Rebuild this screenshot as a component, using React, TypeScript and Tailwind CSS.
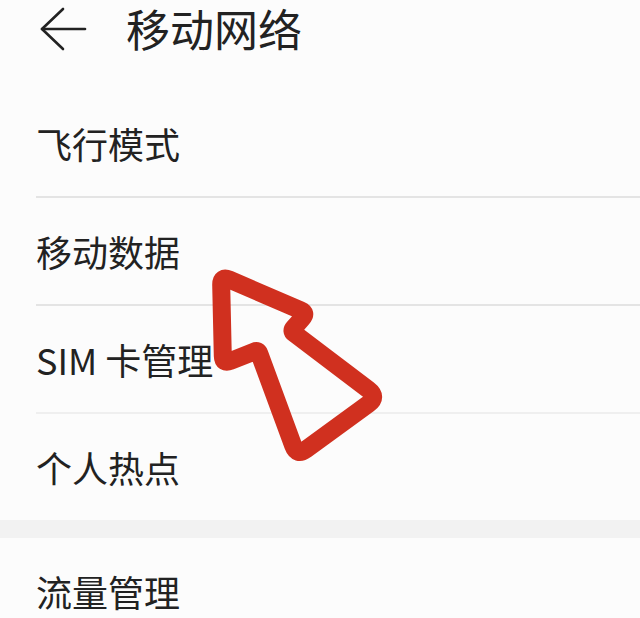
import { useMemo } from 'react'

const items = [
  { label: '飞行模式', divider: 'bg-[#e4e4e4]' },
  { label: '移动数据', divider: 'bg-[#e4e4e4]' },
  { label: 'SIM 卡管理', divider: 'bg-[#efefef]' },
  { label: '个人热点', divider: '' },
]

const cjk = { fontFamily: '"Noto Sans CJK SC", sans-serif' }

// corners of the hand-drawn pointer: x, y, rounding
const pts: [number, number, number][] = [
  [221, 276, 9],
  [307, 313, 7],
  [291, 331, 4],
  [378, 397, 12],
  [297, 456, 11],
  [258, 350, 4],
  [223, 364, 8],
]

function roundedPath(p: [number, number, number][]) {
  const n = p.length
  let d = ''
  for (let i = 0; i < n; i++) {
    const [x, y, r] = p[i]
    const [ax, ay] = p[(i - 1 + n) % n]
    const [bx, by] = p[(i + 1) % n]
    const la = Math.hypot(ax - x, ay - y)
    const lb = Math.hypot(bx - x, by - y)
    const p1 = [x + ((ax - x) * r) / la, y + ((ay - y) * r) / la]
    const p2 = [x + ((bx - x) * r) / lb, y + ((by - y) * r) / lb]
    d += `${i === 0 ? 'M' : 'L'}${p1[0].toFixed(1)} ${p1[1].toFixed(1)} Q${x} ${y} ${p2[0].toFixed(1)} ${p2[1].toFixed(1)} `
  }
  return d + 'Z'
}

function RedArrow() {
  const d = useMemo(() => roundedPath(pts), [])
  return (
    <svg className="pointer-events-none absolute inset-0" width="640" height="618" viewBox="0 0 640 618">
      <path d={d} fill="none" stroke="#d0301f" strokeWidth="18" strokeLinejoin="round" />
    </svg>
  )
}

export default function App() {
  return (
    <div
      className="relative h-[618px] w-[640px] overflow-hidden bg-[#fcfcfc] text-[#222]"
      style={{ fontFamily: '"Noto Sans", "Noto Sans CJK SC", sans-serif' }}
    >
      <header className="h-[90px]">
        <div className="flex h-[58px] items-center">
          <div className="ml-[38px] flex h-[46px] w-[50px] items-center">
            <svg width="50" height="46" viewBox="0 0 50 46" fill="none" stroke="#222" strokeWidth="2.6" strokeLinecap="round" strokeLinejoin="round">
              <path d="M25 3 L4 23 L25 43" />
              <path d="M4 23 H47" />
            </svg>
          </div>
          <h1 className="ml-[38px] text-[44px] leading-[1.3] font-normal" style={cjk}>
            移动网络
          </h1>
        </div>
      </header>

      <div>
        {items.map(item => (
          <div key={item.label}>
            <div className="flex h-[106px] items-center pl-[36px] text-[36px] leading-none" style={cjk}>
              {item.label}
            </div>
            {item.divider && <div className={`ml-[36px] h-[2px] ${item.divider}`} />}
          </div>
        ))}
      </div>

      <div className="h-[18px] bg-[#f2f2f2]" />

      <div className="flex h-[106px] items-center pl-[36px] text-[36px] leading-none" style={cjk}>
        流量管理
      </div>

      <RedArrow />
    </div>
  )
}
